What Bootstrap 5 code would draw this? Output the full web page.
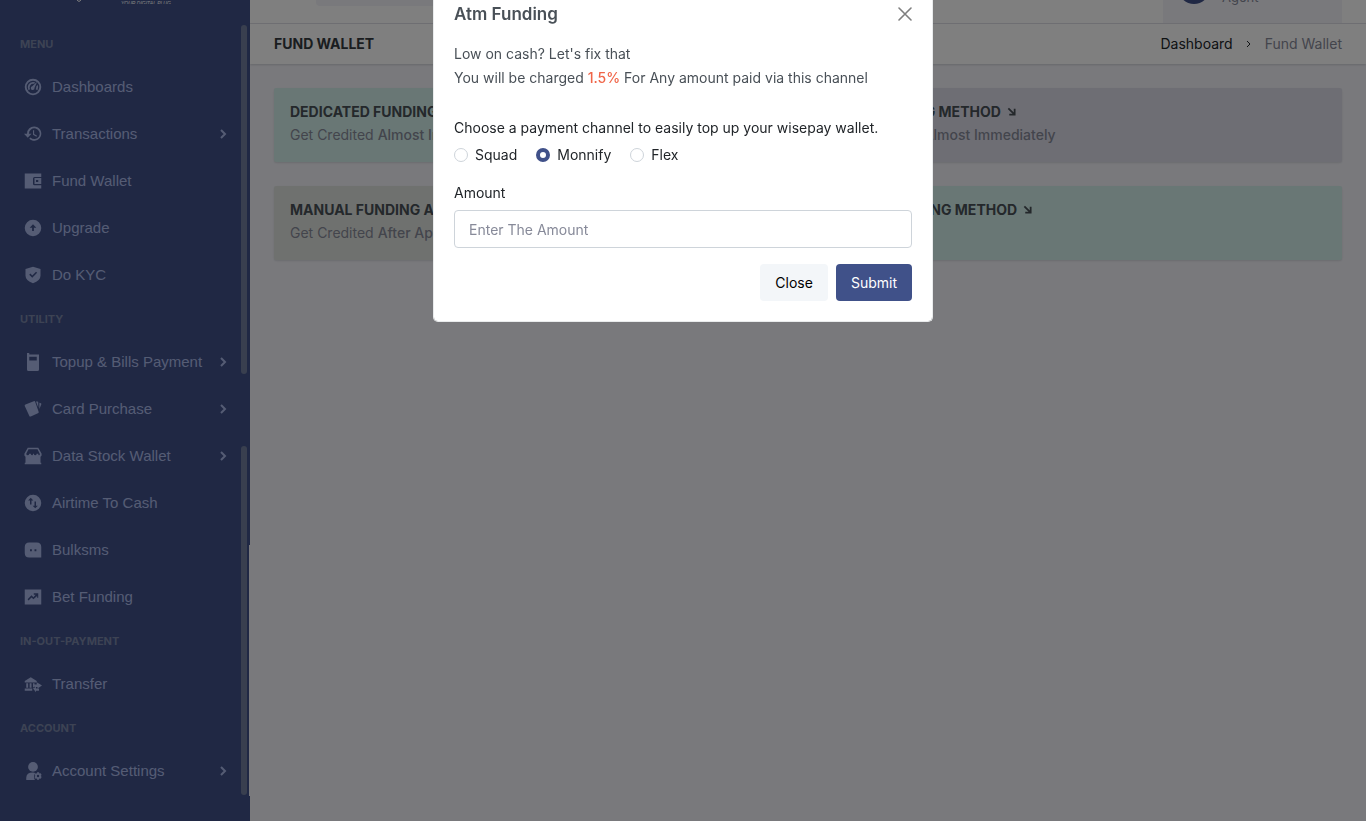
<!DOCTYPE html>
<html lang="en">
<head>
<meta charset="utf-8">
<meta name="viewport" content="width=device-width, initial-scale=1">
<title>Fund Wallet</title>
<link href="https://cdn.jsdelivr.net/npm/bootstrap@5.3.0/dist/css/bootstrap.min.css" rel="stylesheet">
<style>
body{font-family:Inter,"Noto Sans",sans-serif;font-size:14px;line-height:24px;background:#f3f3f9;color:#212529;overflow:hidden}
a{text-decoration:none;color:inherit}
.side{width:250px;background:#405189;color:#abb9e8;font-family:"Liberation Sans",sans-serif;font-size:15px}
.brand{height:23px;padding-left:76px;color:#fff}
.brand-clip{height:4px;overflow:hidden}
.tagline{font-size:5px;line-height:6px;margin-left:39px}
.menu-title{height:40px;padding-left:20px;font:700 11px/42px Inter,sans-serif;color:#7a86a8}
.menu-link{height:47px;padding:0 20px 0 24px;gap:10px;white-space:nowrap}
.menu-link svg{width:18px;height:18px;fill:currentColor;flex:none}
.menu-link .chev{width:14px;height:14px;margin-left:auto}
.chev,.arrow{fill:none!important;stroke:currentColor;stroke-width:2}
.track{position:absolute;left:241px;width:6px;height:349px;border-radius:3px;background:#727f9e}
.track-a{top:25px}.track-b{top:446px}
.edge{position:absolute;left:249px;top:545px;width:1px;height:251px;background:#f3f3f9}
.topbar{height:24px;background:#fff;border-bottom:1px solid #e0e0e6;padding:0 24px 0 66px;overflow:hidden}
.search-end{width:240px;height:6px;background:#f3f3f9;border-radius:0 0 4px 4px}
.user{width:179px;height:23px;background:#f3f3f9;padding:0 15px;gap:12px;color:#878a99;font-size:13px}
.avatar{width:32px;height:32px;border-radius:50%;background:#405189;margin-bottom:19px}
.role{line-height:20px;margin-bottom:16px}
.titlebar{height:40px;background:#fff;padding:0 24px;box-shadow:0 1px 2px rgba(56,65,74,.2)}
.titlebar h1{font-size:14px;font-weight:700;color:#343a40}
.crumbs{gap:12px}
.crumbs svg{width:8px;height:10px;stroke-width:1}
.crumbs .here{color:#878a99}
.content{padding:24px}
.tile{padding:12px 16px;height:74px;border-radius:2px;box-shadow:0 1px 2px rgba(56,65,74,.15);color:#878a99;line-height:22px}
.tile h2{font-size:14px;line-height:24px;font-weight:700;color:#495057}
.tile h2 svg{width:9px;height:9px;margin:0 0 3px 3px}
.mint{background:#d2eeea}.lilac{background:#dddde9}.stone{background:#dfe3df}
.funding{border:1px solid #e9ebec;border-top:0;border-radius:0 0 5px 5px;padding:0 20px 20px}
.funding h3{font-size:17px;line-height:28px;font-weight:600;color:#495057}
.xbtn{border:0;background:none;padding:0;width:14px;height:28px;color:#7f7f7f}
.intro{color:#495057;margin:14px 0 26px}
.hot{color:#f06548;font-weight:500}
.choices{gap:19px;margin:3px 0 14px}
.choices label{gap:7px}
.choices .form-check-input{width:14px;height:14px;margin:0;border-color:#ced4da}
.choices .form-check-input:checked{border:4px solid #405189;background-image:none;background-color:#fff}
.amount{height:38px;font-size:14px;border-color:#ced4da;border-radius:4px;padding:7px 14px;margin-top:5px}
.amount::placeholder{color:#878a99}
.acts{gap:8px;margin-top:16px}
.acts .btn{height:37px;font-size:14px;border:0;border-radius:4px;padding:0 15px}
.btn-soft{background:#f3f6f9;color:#000}.btn-main{background:#405189;color:#fff}
</style>
</head>
<body>
<svg class="d-none" aria-hidden="true">
<symbol id="next" viewBox="0 0 14 14"><path d="M5 3l4 4-4 4"/></symbol>
<symbol id="diag" viewBox="0 0 10 10"><path d="M1.500 1.500l6.500 6.500M8.500 2v6.500H2.500"/></symbol>
</svg>
<div class="d-flex min-vh-100">
<nav class="side flex-shrink-0" aria-label="Main">
<div class="brand"><div class="brand-clip d-flex align-items-start"><svg width="6" height="2" viewBox="0 0 6 2"><path d="M1 0q2 3 4 0" fill="none" stroke="#fff"/></svg><span class="tagline fst-italic">YOUR DIGITAL PLUG</span></div></div>
<div class="menu-title">MENU</div>
<a href="#" class="menu-link d-flex align-items-center"><svg viewBox="0 0 24 24"><path fill-rule="evenodd" d="M12 1a11 11 0 1 0 0 22 11 11 0 0 0 0-22zm0 2.500a8.500 8.500 0 1 1 0 17 8.500 8.500 0 0 1 0-17zm0 2a7 7 0 0 0-6 10.700l2-1.300A5 5 0 0 1 13.500 7.700l1.500-1.700a7 7 0 0 0-3-.5zm5.500-.5l-6.500 6a2.500 2.500 0 1 0 3 2zM18 9l-1.700 2.500a5 5 0 0 1-.6 3.500l2.200 1.200A7 7 0 0 0 18 9z"/></svg>Dashboards</a>
<a href="#" class="menu-link d-flex align-items-center"><svg viewBox="0 0 24 24"><path d="M13.500 7H12v6l4.500 2.700.9-1.500-3.900-2.200V7M13.500 2a9.500 9.500 0 0 0-9.500 9.500H0L5 17l5-5.500H6.500a7.200 7.200 0 1 1 2.100 5.200L7 18.400A9.500 9.500 0 1 0 13.500 2"/></svg>Transactions<svg class="chev"><use href="#next"/></svg></a>
<a href="#" class="menu-link d-flex align-items-center"><svg viewBox="0 0 24 24"><path d="M1 2h22v4.500H14q-2 0-2 2v7q0 2 2 2h9V22H1z"/><path fill-rule="evenodd" d="M14 8h9v8h-9zm2 2.800v2.400h3v-2.400z"/></svg>Fund Wallet</a>
<a href="#" class="menu-link d-flex align-items-center"><svg viewBox="0 0 24 24"><path fill-rule="evenodd" d="M12 1a11 11 0 1 0 0 22 11 11 0 0 0 0-22zm0 6l4.500 4.500h-3.300V16h-2.400v-4.500H7.500z"/></svg>Upgrade</a>
<a href="#" class="menu-link d-flex align-items-center"><svg viewBox="0 0 24 24"><path fill-rule="evenodd" d="M12 1l10 3v9q0 6-10 10Q2 19 2 13V4zm-1 14.500l6.500-6.500-1.500-1.500-5 5L8.500 10 7 11.500z"/></svg>Do KYC</a>
<div class="menu-title">UTILITY</div>
<a href="#" class="menu-link d-flex align-items-center"><svg viewBox="0 0 24 24"><path fill-rule="evenodd" d="M4 0h3v2h13v20q0 2-2 2H6q-2 0-2-2zm3 5v5h10V5z"/></svg>Topup &amp; Bills Payment<svg class="chev"><use href="#next"/></svg></a>
<a href="#" class="menu-link d-flex align-items-center"><svg viewBox="0 0 24 24"><path d="M2 6l11-4.500q1.500-.5 2 1l4.500 13q.5 1.500-1 2L9 22q-1.500.5-2-1L1 8q-.5-1.500 1-2zM16 2h2q1 0 1 1v7zM20.500 3.500l2 .8q1 .5.500 1.700l-2.500 6z"/></svg>Card Purchase<svg class="chev"><use href="#next"/></svg></a>
<a href="#" class="menu-link d-flex align-items-center"><svg viewBox="0 0 24 24"><path fill-rule="evenodd" d="M5 1h14l4.500 8q.5 3-1.500 4v8h1v2H1v-2h1v-8Q0 12 .5 9zm1 2L3 9q0 2 2 2 1.500 0 2-2h2q.5 2 2 2 1 0 1-2h1q.5 2 2 2t2-2h2q0 2 1 2 1.500 0 1-2l-3-6z"/></svg>Data Stock Wallet<svg class="chev"><use href="#next"/></svg></a>
<a href="#" class="menu-link d-flex align-items-center"><svg viewBox="0 0 24 24"><path fill-rule="evenodd" d="M12 1a11 11 0 1 0 0 22 11 11 0 0 0 0-22zM9 5l3.500 3.500H10V14H8V8.500H5.500zm5 5h2v5.500h2.500L15 19l-3.500-3.500H14z"/></svg>Airtime To Cash</a>
<a href="#" class="menu-link d-flex align-items-center"><svg viewBox="0 0 24 24"><path fill-rule="evenodd" d="M7 2h10q6 0 6 6v14H7q-6 0-6-6V8q0-6 6-6zm1 9v2.500h2.500V11zm6 0v2.500h2.500V11z"/></svg>Bulksms</a>
<a href="#" class="menu-link d-flex align-items-center"><svg viewBox="0 0 24 24"><path fill-rule="evenodd" d="M1 2h22v20H1zm5 14.500l4-4 2.500 2.500 5-4.500V13H19V7h-6v2h2.500l-3 3.200L10 9.700 4.800 15z"/></svg>Bet Funding</a>
<div class="menu-title">IN-OUT-PAYMENT</div>
<a href="#" class="menu-link d-flex align-items-center"><svg viewBox="0 0 24 24"><path d="M1 8l8-5 8 5v2H1zM3 11h2.500v6H3zm4.500 0H10v6H7.500zm4.500 0h2v4l-2 2zM1 18h10v3H1zM17 9.500l7 4.500-6 4v-2h-4v-3.500h3zM12 18l4-2.500V18h4v3h-4v2z"/></svg>Transfer</a>
<div class="menu-title">ACCOUNT</div>
<a href="#" class="menu-link d-flex align-items-center"><svg viewBox="0 0 24 24"><circle cx="12" cy="6.500" r="6.500"/><path d="M3 24v-3q0-7 9-7 2 0 3 .5-3 4-.5 9.500z"/><path fill-rule="evenodd" d="M17.500 13.500h2.500l.5 1.700 1.700-.3 1.300 2.300-1.200 1.300 1.200 1.500-1.300 2.200-1.700-.3-.5 1.600h-2.500l-.5-1.600-1.700.3-1.300-2.200 1.200-1.500-1.200-1.300 1.300-2.300 1.700.3zm1.200 3.500a1.600 1.600 0 1 0 0 3.200 1.600 1.600 0 0 0 0-3.200z"/></svg>Account Settings<svg class="chev"><use href="#next"/></svg></a>
<span class="track track-a"></span><span class="track track-b"></span><span class="edge"></span>
</nav>
<div class="flex-grow-1">
<header class="topbar d-flex justify-content-between align-items-start">
<div class="search-end"></div>
<div class="user d-flex align-items-end"><span class="avatar flex-shrink-0"></span><span class="role">Agent</span></div>
</header>
<div class="titlebar d-flex justify-content-between align-items-center">
<h1 class="m-0">FUND WALLET</h1>
<nav class="crumbs d-flex align-items-center" aria-label="Breadcrumb"><a href="#">Dashboard</a><svg class="arrow" viewBox="0 0 8 10"><path d="M2 2l3 3-3 3"/></svg><span class="here">Fund Wallet</span></nav>
</div>
<main class="content">
<div class="row g-4">
<div class="col-6"><div class="tile mint"><h2 class="m-0">DEDICATED FUNDING METHOD <svg class="arrow"><use href="#diag"/></svg></h2>Get Credited <span class="fw-medium">Almost Immediately</span></div></div>
<div class="col-6"><div class="tile lilac"><h2 class="m-0">ATM FUNDING METHOD <svg class="arrow"><use href="#diag"/></svg></h2>Get Credited <span class="fw-medium">Almost Immediately</span></div></div>
<div class="col-6"><div class="tile stone"><h2 class="m-0">MANUAL FUNDING ACCOUNT <svg class="arrow"><use href="#diag"/></svg></h2>Get Credited <span class="fw-medium">After Approval</span></div></div>
<div class="col-6"><div class="tile mint"><h2 class="m-0">OTHER FUNDING METHOD <svg class="arrow"><use href="#diag"/></svg></h2></div></div>
</div>
</main>
</div>
</div>
<div class="modal-backdrop show"></div>
<div class="modal d-block" role="dialog" aria-labelledby="funding-title">
<div class="modal-dialog my-0"><form class="modal-content funding">
<div class="d-flex justify-content-between align-items-center"><h3 class="m-0" id="funding-title">Atm Funding</h3><button type="button" class="xbtn d-flex align-items-center" aria-label="Close dialog"><svg width="14" height="14" viewBox="0 0 14 14"><path d="M1 1l12 12M13 1L1 13" stroke="currentColor" stroke-width="1.600" stroke-linecap="round"/></svg></button></div>
<p class="intro">Low on cash? Let's fix that<br>You will be charged <span class="hot">1.5%</span> For Any amount paid via this channel</p>
<div>Choose a payment channel to easily top up your wisepay wallet.</div>
<div class="choices d-flex">
<label class="d-flex align-items-center"><input class="form-check-input" type="radio" name="channel">Squad</label>
<label class="d-flex align-items-center"><input class="form-check-input" type="radio" name="channel" checked>Monnify</label>
<label class="d-flex align-items-center"><input class="form-check-input" type="radio" name="channel">Flex</label>
</div>
<label for="amount">Amount</label>
<input id="amount" class="form-control amount" type="text" placeholder="Enter The Amount">
<div class="acts d-flex justify-content-end"><button type="button" class="btn btn-soft">Close</button><button type="submit" class="btn btn-main">Submit</button></div>
</form></div>
</div>
<script src="https://cdn.jsdelivr.net/npm/bootstrap@5.3.0/dist/js/bootstrap.bundle.min.js"></script>
</body>
</html>
